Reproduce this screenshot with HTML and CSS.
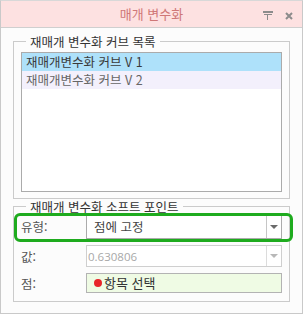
FILE: index.html
```html
<!DOCTYPE html>
<html lang="ko">
<head>
<meta charset="utf-8">
<link rel="stylesheet" href="styles.css">
</head>
<body>
<div class="window">
  <div class="titlebar">
    <span class="title">매개 변수화</span>
    <div class="tools">
      <svg class="pin" width="12" height="10" viewBox="0 0 12 10">
        <rect x="1" y="0" width="10" height="2" fill="#8c8c8c"/>
        <rect x="2" y="3" width="8" height="1" fill="#8c8c8c"/>
        <rect x="5" y="3" width="1" height="6" fill="#8c8c8c"/>
      </svg>
      <svg class="close" width="8" height="8" viewBox="0 0 8 8">
        <path d="M1 1 L7 7 M7 1 L1 7" stroke="#8c8c8c" stroke-width="2"/>
      </svg>
    </div>
  </div>
  <div class="content">
    <div class="group group-list">
      <div class="group-title">재매개 변수화 커브 목록</div>
      <div class="listbox">
        <div class="item selected">재매개변수화 커브 V 1</div>
        <div class="item hover">재매개변수화 커브 V 2</div>
      </div>
    </div>
    <div class="group group-points">
      <div class="group-title">재매개 변수화 소프트 포인트</div>
      <div class="rows">
        <div class="row row-type highlighted">
          <span class="label">유형:</span>
          <div class="combo">
            <span class="combo-text">점에 고정</span>
            <span class="combo-btn"><span class="arrow"></span></span>
          </div>
        </div>
        <div class="row row-value">
          <span class="label">값:</span>
          <div class="combo disabled">
            <span class="combo-text">0.630806</span>
            <span class="combo-btn"><span class="arrow"></span></span>
          </div>
        </div>
        <div class="row row-point">
          <span class="label">점:</span>
          <div class="picker">
            <span class="dot"></span>
            <span class="picker-text">항목 선택</span>
          </div>
        </div>
      </div>
    </div>
  </div>
</div>
</body>
</html>
```

FILE: styles.css
```css
* { box-sizing: border-box; }
html, body { margin: 0; padding: 0; background: #ffffff; }
body {
  font-family: "Noto Sans CJK KR", "Noto Sans", sans-serif;
  font-size: 12px;
  color: #444;
}
.window {
  width: 303px;
  height: 314px;
  border: 1px solid #c9c9c9;
  border-top-color: #d8d8d8;
  background: #fcfcfc;
  display: flex;
  flex-direction: column;
}
.titlebar {
  height: 27px;
  background: #fde1e1;
  border-bottom: 1px solid #cfcfcf;
  display: flex;
  align-items: center;
  justify-content: center;
  position: relative;
}
.title {
  color: #cf7777;
  font-size: 13px;
  line-height: 16px;
}
.tools {
  position: absolute;
  right: 9px;
  top: 10px;
  display: flex;
  align-items: flex-start;
  gap: 11px;
}
.pin { display: block; }
.close { display: block; margin-top: 1px; }
.content {
  flex: 1;
  padding: 13px 12px 0 12px;
  display: flex;
  flex-direction: column;
}
.group {
  border: 1px solid #cbcbcb;
  display: flex;
  flex-direction: column;
}
.group-list { padding: 0 7px 6px 7px; }
.group-points { margin-top: 7px; padding: 0 7px 8px 7px; }
.group-title {
  align-self: flex-start;
  background: #fcfcfc;
  color: #333;
  font-size: 12.5px;
  padding: 0 4px;
  margin-left: 5px;
}
.group-list .group-title { margin-top: -9px; line-height: 17px; }
.group-points .group-title { margin-top: -8px; line-height: 16px; }
.listbox {
  margin-top: 2px;
  height: 140px;
  border: 1px solid #ababab;
  background: #ffffff;
}
.item {
  height: 18px;
  line-height: 18px;
  padding-left: 4px;
  font-size: 12.5px;
}
.item.selected { background: #aee1fa; color: #3a3a3a; }
.item.hover { background: #f3f0fc; color: #666; }
.rows { margin-top: -1px; display: flex; flex-direction: column; }
.row { display: flex; align-items: stretch; }
.row-type { height: 25px; }
.row-value { height: 22px; margin-top: 6px; }
.row-point { height: 20px; margin-top: 6px; }
.label {
  width: 65px;
  display: flex;
  align-items: center;
  color: #555;
  font-size: 12.5px;
}
.highlighted { position: relative; }
.highlighted::after {
  content: "";
  position: absolute;
  left: -7px;
  right: -11px;
  top: -1px;
  bottom: -3px;
  border: 3px solid #1eab1e;
  border-radius: 6px;
  pointer-events: none;
}
.combo {
  width: 196px;
  border: 1px solid #ababab;
  background: #ffffff;
  display: flex;
}
.combo-text {
  flex: 1;
  display: flex;
  align-items: center;
  padding-left: 7px;
  color: #444;
  font-size: 12.5px;
}
.combo-btn {
  width: 15px;
  border-left: 1px solid #c6c6c6;
  display: flex;
  align-items: center;
  justify-content: center;
}
.arrow {
  width: 0;
  height: 0;
  border-left: 4px solid transparent;
  border-right: 4px solid transparent;
  border-top: 4px solid #6a6a6a;
}
.combo.disabled { border-color: #cfcfcf; }
.combo.disabled .combo-text {
  padding-left: 1px;
  color: #a8a8a8;
  font-family: "Open Sans", "Noto Sans", sans-serif;
  font-size: 11.5px;
}
.combo.disabled .combo-btn { border-left-color: #dcdcdc; }
.combo.disabled .arrow { border-top-color: #b8b8b8; }
.picker {
  width: 196px;
  border: 1px solid #b3b3b3;
  background: #effbe4;
  display: flex;
  align-items: center;
  padding-left: 7px;
}
.dot {
  width: 8px;
  height: 8px;
  border-radius: 50%;
  background: #e8262a;
  margin-right: 2px;
}
.picker-text { color: #333; font-size: 13px; line-height: 16px; }
```
